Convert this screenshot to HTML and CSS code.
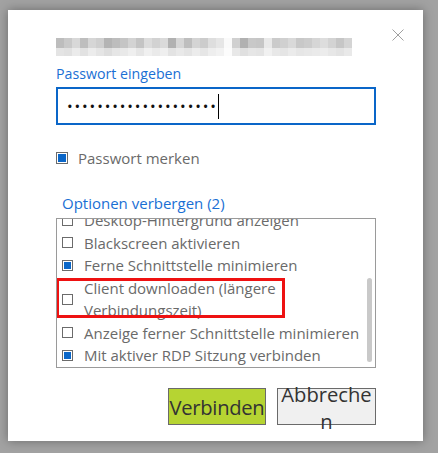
FILE: index.html
```html
<!DOCTYPE html>
<html lang="de">
<head>
  <meta charset="UTF-8" />
  <title>Verbinden</title>
  <link rel="stylesheet" href="styles.css">
</head>
<body>
  <div class="dialog">
    <button class="close" aria-label="Schließen">
      <svg width="12" height="12" viewBox="0 0 12 12"><path d="M0.5 0.5 L11.5 11.5 M11.5 0.5 L0.5 11.5" stroke="#a0a0a0" stroke-width="1" fill="none"/></svg>
    </button>

    <!-- blurred host name -->
    <div class="mosaic">
      <div class="mosaic-row top">
        <span style="background:#bdbdbd"></span><span style="background:#c9c9c9"></span><span style="background:#d8d8d8"></span><span style="background:#bebebe"></span><span style="background:#d6d6d6"></span><span style="background:#cfcfcf"></span><span style="background:#b4b4b4"></span><span style="background:#bdbdbd"></span><span style="background:#c5c5c5"></span><span style="background:#d3d3d3"></span><span style="background:#c4c4c4"></span><span style="background:#dcdcdc"></span><span style="background:#d2d2d2"></span><span style="background:#dadada"></span><span style="background:#b1b1b1"></span><span style="background:#d6d6d6"></span><span style="background:#bebebe"></span><span style="background:#d4d4d4"></span><span style="background:#cccccc"></span><span style="background:#dedede"></span><span style="background:#e6e6e6"></span><span style="background:#fafafa"></span><span style="background:#d0d0d0"></span><span style="background:#b1b1b1"></span><span style="background:#c8c8c8"></span><span style="background:#c6c6c6"></span><span style="background:#e9e9e9"></span><span style="background:#cbcbcb"></span><span style="background:#d0d0d0"></span><span style="background:#d9d9d9"></span><span style="background:#c8c8c8"></span><span style="background:#cccccc"></span><span style="background:#d6d6d6"></span><span style="background:#dddddd"></span><span style="background:#d3d3d3"></span><span style="background:#c6c6c6"></span><span style="background:#d4d4d4"></span>
      </div>
      <div class="mosaic-row bottom">
        <span style="background:#e4e4e4"></span><span style="background:#e1e1e1"></span><span style="background:#ebebeb"></span><span style="background:#e2e2e2"></span><span style="background:#ececec"></span><span style="background:#e5e5e5"></span><span style="background:#dedede"></span><span style="background:#e6e6e6"></span><span style="background:#e9e9e9"></span><span style="background:#efefef"></span><span style="background:#e6e6e6"></span><span style="background:#f0f0f0"></span><span style="background:#eaeaea"></span><span style="background:#efefef"></span><span style="background:#e3e3e3"></span><span style="background:#e9e9e9"></span><span style="background:#e4e4e4"></span><span style="background:#ececec"></span><span style="background:#e6e6e6"></span><span style="background:#eeeeee"></span><span style="background:#f2f2f2"></span><span style="background:#fcfcfc"></span><span style="background:#e8e8e8"></span><span style="background:#e0e0e0"></span><span style="background:#e6e6e6"></span><span style="background:#e4e4e4"></span><span style="background:#f1f1f1"></span><span style="background:#e8e8e8"></span><span style="background:#e5e5e5"></span><span style="background:#ebebeb"></span><span style="background:#e6e6e6"></span><span style="background:#e8e8e8"></span><span style="background:#eaeaea"></span><span style="background:#ececec"></span><span style="background:#e7e7e7"></span><span style="background:#e3e3e3"></span><span style="background:#e9e9e9"></span>
      </div>
    </div>

    <label class="field-label">Passwort eingeben</label>
    <div class="password">
      <span class="dots">••••••••••••••••••••</span><span class="caret"></span>
    </div>

    <div class="remember">
      <span class="check on"></span>
      <span>Passwort merken</span>
    </div>

    <a class="toggle">Optionen verbergen (2)</a>

    <div class="listbox">
      <div class="items">
        <div class="item"><span class="check small"></span><span>Desktop-Hintergrund anzeigen</span></div>
        <div class="item"><span class="check small"></span><span>Blackscreen aktivieren</span></div>
        <div class="item"><span class="check small on"></span><span>Ferne Schnittstelle minimieren</span></div>
        <div class="item"><span class="check small"></span><span>Client downloaden (längere Verbindungszeit)</span></div>
        <div class="item"><span class="check small"></span><span>Anzeige ferner Schnittstelle minimieren</span></div>
        <div class="item"><span class="check small on"></span><span>Mit aktiver RDP Sitzung verbinden</span></div>
      </div>
      <div class="track"><div class="thumb"></div></div>
      <div class="highlight"></div>
    </div>

    <div class="actions">
      <button class="btn primary">Verbinden</button>
      <button class="btn cancel"><span class="btn-text">Abbrechen</span></button>
    </div>
  </div>
</body>
</html>
```

FILE: styles.css
```css
body {
  margin: 0;
  width: 438px;
  height: 453px;
  background-color: #a2a2a2;
  font-family: 'Open Sans', 'Noto Sans', sans-serif;
  overflow: hidden;
}
.dialog {
  position: relative;
  margin: 10px 0 0 8px;
  width: 415px;
  height: 431px;
  box-sizing: border-box;
  padding: 28px 0 0 48px;
  background: #ffffff;
  box-shadow: 0 0 10px rgba(0, 0, 0, 0.35);
}
.close {
  position: absolute;
  top: 19px;
  right: 19px;
  padding: 0;
  border: none;
  background: none;
  line-height: 0;
}
.mosaic {
  width: 298px;
  height: 18px;
}
.mosaic-row {
  display: flex;
}
.mosaic-row span {
  width: 8px;
  flex: none;
}
.mosaic-row.top span {
  height: 10px;
}
.mosaic-row.bottom span {
  height: 8px;
}
.field-label {
  display: block;
  margin-top: 8px;
  font-size: 14.2px;
  line-height: 20px;
  color: #1a6fd4;
}
.password {
  margin-top: 3px;
  width: 320px;
  height: 38px;
  box-sizing: border-box;
  border: 2px solid #0a66c8;
  display: flex;
  align-items: center;
  padding-left: 9px;
}
.dots {
  font-size: 15px;
  letter-spacing: 1.9px;
  color: #111;
}
.caret {
  width: 1px;
  height: 25px;
  background: #000;
}
.remember {
  margin-top: 27px;
  display: flex;
  align-items: center;
  gap: 10px;
  font-size: 15px;
  color: #6a6a6a;
  line-height: 12px;
}
.check {
  width: 12px;
  height: 12px;
  box-sizing: border-box;
  border: 1px solid #6b6b6b;
  background: #fff;
  flex: none;
}
.check.on {
  background: #0a66c8;
  box-shadow: inset 0 0 0 1px #fff;
}
.check.small {
  width: 11px;
  height: 11px;
}
.toggle {
  display: block;
  margin: 29px 0 0 6px;
  font-size: 15px;
  line-height: 20px;
  color: #1a6fd4;
}
.listbox {
  position: relative;
  margin-top: 5px;
  width: 320px;
  height: 150px;
  box-sizing: border-box;
  border: 1px solid #9a9a9a;
  display: flex;
  overflow: hidden;
}
.items {
  flex: 1;
  margin-top: -10px;
  padding-left: 5px;
}
.item {
  display: flex;
  align-items: center;
  gap: 11px;
  font-size: 15px;
  line-height: 22.5px;
  color: #6a6a6a;
}
.track {
  width: 9px;
  flex: none;
}
.thumb {
  margin: 59px 0 0 1px;
  width: 5px;
  height: 84px;
  border-radius: 3px;
  background: #c9c9c9;
}
.highlight {
  position: absolute;
  left: -1px;
  top: 59px;
  width: 229px;
  height: 40px;
  box-sizing: border-box;
  border: 3px solid #ee1111;
}
.actions {
  margin: 20px 0 0 112px;
  display: flex;
  gap: 11px;
}
.btn {
  width: 99px;
  height: 37px;
  padding: 0;
  border: 1px solid #6a6a6a;
  background: #f0f0f0;
  font-family: 'Open Sans', 'Noto Sans', sans-serif;
  font-size: 20.2px;
  line-height: 26px;
  color: #333;
  word-break: break-all;
  overflow: visible;
}
.btn.cancel {
  display: flex;
  align-items: flex-start;
  justify-content: center;
}
.btn-text {
  display: block;
  margin-top: -8px;
  line-height: 27px;
}
.btn.primary {
  width: 98px;
  background: #b6d432;
  white-space: nowrap;
  word-break: normal;
  letter-spacing: -0.3px;
}
```
